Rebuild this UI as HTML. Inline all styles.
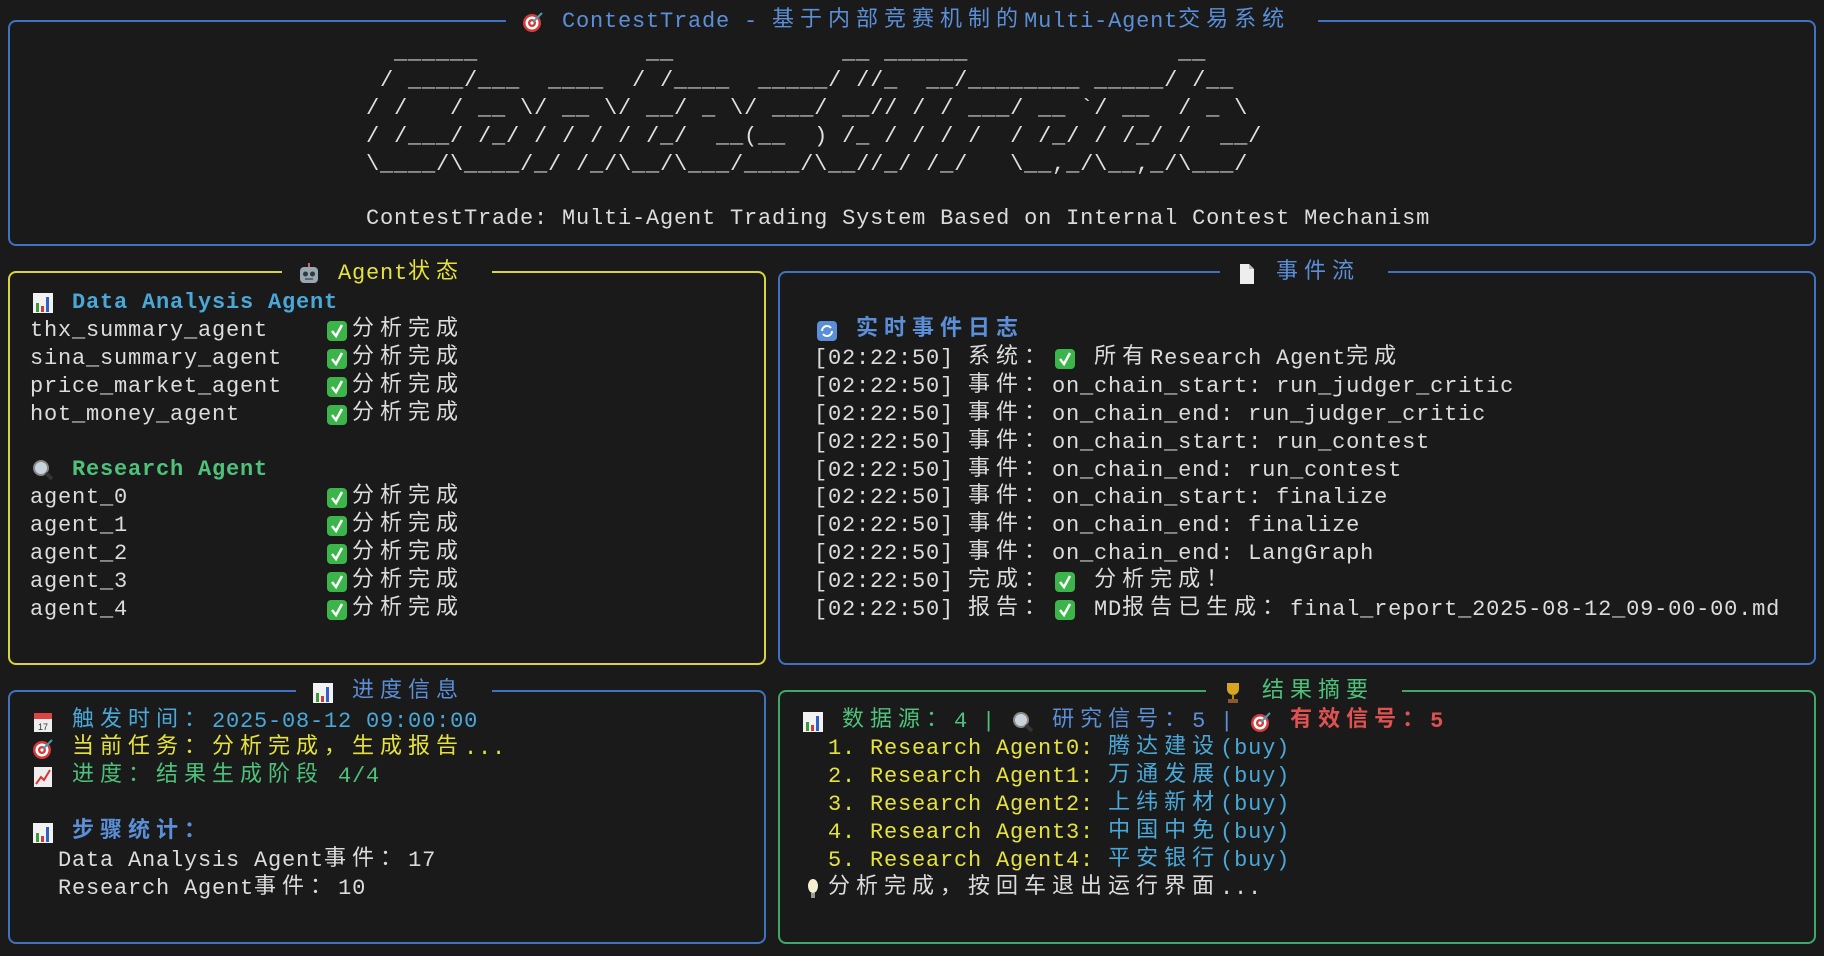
<!DOCTYPE html>
<html><head><meta charset="utf-8"><style>
html,body{margin:0;padding:0;background:#1a1a1a;width:1824px;height:956px;overflow:hidden;position:relative}
pre,.t{position:absolute;margin:0;font-family:"Liberation Mono","Noto Sans CJK SC",monospace;font-size:22px;letter-spacing:0.8px;line-height:27.9px;color:#dcdcdc;white-space:pre}
i{font-style:normal;letter-spacing:6px;font-family:"Noto Sans CJK SC","WenQuanYi Zen Hei",sans-serif;vertical-align:top;line-height:27.9px;display:inline-block;height:27.9px;position:relative;top:-4px}
.p{position:absolute;box-sizing:border-box;border:2px solid #3f72c0;border-radius:8px}
.e{display:inline-block;width:28px;height:27px;vertical-align:top;letter-spacing:0}
.e svg{margin-top:2px;margin-left:1px}
.bg{background:#1a1a1a;padding:0 14px 0 14px}
.blue{color:#5b8fd8}.cy{color:#4aa8d8}.gr{color:#4ec27a}.ye{color:#e6e23c}.re{color:#e05252}
b{font-weight:bold}
</style></head><body>
<svg width="0" height="0" style="position:absolute">
<defs>
<symbol id="chart" viewBox="0 0 24 24"><rect x="2" y="2" width="20" height="20" fill="#f2f2f2"/><rect x="5" y="12" width="3" height="9" fill="#3a9a3a"/><rect x="10" y="15" width="3" height="6" fill="#d23a3a"/><rect x="15" y="6" width="3" height="15" fill="#2f5fc8"/></symbol>
<symbol id="target" viewBox="0 0 24 24"><circle cx="11" cy="13" r="9" fill="#d83a3a"/><circle cx="11" cy="13" r="6.5" fill="#fff"/><circle cx="11" cy="13" r="4" fill="#d83a3a"/><circle cx="11" cy="13" r="1.6" fill="#fff"/><path d="M12 12 L21 3" stroke="#4a9ab0" stroke-width="2"/></symbol>
<symbol id="robot" viewBox="0 0 24 24"><rect x="11" y="1" width="2" height="4" fill="#c66"/><rect x="3" y="5" width="18" height="16" rx="4" fill="#9aa6b0"/><circle cx="8.5" cy="12" r="2.5" fill="#2c3a46"/><circle cx="15.5" cy="12" r="2.5" fill="#2c3a46"/><rect x="8" y="16" width="8" height="2" fill="#5a6670"/></symbol>
<symbol id="doc" viewBox="0 0 24 24"><path d="M5 2 H14 L19 7 V22 H5 Z" fill="#eee"/><path d="M14 2 V7 H19" fill="#bbb"/></symbol>
<symbol id="refresh" viewBox="0 0 24 24"><rect x="2" y="2" width="20" height="20" rx="4" fill="#5b8fd8"/><path d="M7 12 A5 5 0 0 1 16 9 M17 12 A5 5 0 0 1 8 15" stroke="#fff" stroke-width="2" fill="none"/></symbol>
<symbol id="mag" viewBox="0 0 24 24"><circle cx="10" cy="10" r="7" fill="#c8d4dc" stroke="#888" stroke-width="2"/><path d="M15 15 L21 21" stroke="#333" stroke-width="4"/></symbol>
<symbol id="cal" viewBox="0 0 24 24"><rect x="3" y="3" width="18" height="19" fill="#eee"/><rect x="3" y="3" width="18" height="6" fill="#d44"/><text x="12" y="20" font-size="9" text-anchor="middle" fill="#333" font-family="Liberation Sans">17</text></symbol>
<symbol id="trend" viewBox="0 0 24 24"><rect x="3" y="2" width="18" height="20" fill="#eee"/><path d="M5 19 L10 12 L13 15 L19 5" stroke="#d33" stroke-width="2" fill="none"/></symbol>
<symbol id="trophy" viewBox="0 0 24 24"><path d="M6 2 H18 V8 A6 6 0 0 1 6 8 Z" fill="#d9a520"/><rect x="11" y="13" width="2" height="5" fill="#b8860b"/><rect x="7" y="18" width="10" height="4" fill="#8b5a2b"/></symbol>
<symbol id="bulb" viewBox="0 0 24 24"><ellipse cx="12" cy="9" rx="5" ry="7" fill="#f4f0d0"/><rect x="10" y="16" width="4" height="5" fill="#999"/></symbol>
<symbol id="ok" viewBox="0 0 24 24"><rect x="2" y="2" width="20" height="20" rx="4" fill="#3bb54a"/><path d="M7 12 L11 17 L17 6" stroke="#fff" stroke-width="2.5" fill="none"/></symbol>
</defs></svg>

<div class="p" style="left:8px;top:20px;width:1808px;height:226px"></div>
<div class="p" style="left:8px;top:271px;width:758px;height:394px;border-color:#d8d43a"></div>
<div class="p" style="left:778px;top:271px;width:1038px;height:394px"></div>
<div class="p" style="left:8px;top:690px;width:758px;height:254px"></div>
<div class="p" style="left:778px;top:690px;width:1038px;height:254px;border-color:#3fa868"></div>

<pre style="left:506px;top:8px" class="blue"><span class="bg"><span class="e"><svg width="24" height="24"><use href="#target"/></svg></span> ContestTrade - <i>基于内部竞赛机制的</i>Multi-Agent<i>交易系统</i> </span></pre>
<pre style="left:366px;top:39px;color:#e0e0e0">  ______            __            __ ______               __
 / ____/___  ____  / /____  _____/ //_  __/________ _____/ /__
/ /   / __ \/ __ \/ __/ _ \/ ___/ __// / / ___/ __ `/ __  / _ \
/ /___/ /_/ / / / / /_/  __(__  ) /_ / / / /  / /_/ / /_/ /  __/
\____/\____/_/ /_/\__/\___/____/\__//_/ /_/   \__,_/\__,_/\___/</pre>
<pre style="left:366px;top:205px">ContestTrade: Multi-Agent Trading System Based on Internal Contest Mechanism</pre>

<pre style="left:282px;top:260px" class="ye"><span class="bg"><span class="e"><svg width="24" height="24"><use href="#robot"/></svg></span> Agent<i>状态</i> </span></pre>
<pre style="left:30px;top:289px"><span class="e"><svg width="24" height="24"><use href="#chart"/></svg></span> <b class="cy">Data Analysis Agent</b>
thx_summary_agent    <span class="e"><svg width="24" height="24"><use href="#ok"/></svg></span><i>分析完成</i>
sina_summary_agent   <span class="e"><svg width="24" height="24"><use href="#ok"/></svg></span><i>分析完成</i>
price_market_agent   <span class="e"><svg width="24" height="24"><use href="#ok"/></svg></span><i>分析完成</i>
hot_money_agent      <span class="e"><svg width="24" height="24"><use href="#ok"/></svg></span><i>分析完成</i>

<span class="e"><svg width="24" height="24"><use href="#mag"/></svg></span> <b class="gr">Research Agent</b>
agent_0              <span class="e"><svg width="24" height="24"><use href="#ok"/></svg></span><i>分析完成</i>
agent_1              <span class="e"><svg width="24" height="24"><use href="#ok"/></svg></span><i>分析完成</i>
agent_2              <span class="e"><svg width="24" height="24"><use href="#ok"/></svg></span><i>分析完成</i>
agent_3              <span class="e"><svg width="24" height="24"><use href="#ok"/></svg></span><i>分析完成</i>
agent_4              <span class="e"><svg width="24" height="24"><use href="#ok"/></svg></span><i>分析完成</i></pre>

<pre style="left:1220px;top:260px" class="blue"><span class="bg"><span class="e"><svg width="24" height="24"><use href="#doc"/></svg></span> <i>事件流</i> </span></pre>
<pre style="left:814px;top:317px"><span class="e"><svg width="24" height="24"><use href="#refresh"/></svg></span> <b class="blue"><i>实时事件日志</i></b>
[02:22:50] <i>系统：</i><span class="e"><svg width="24" height="24"><use href="#ok"/></svg></span> <i>所有</i>Research Agent<i>完成</i>
[02:22:50] <i>事件：</i>on_chain_start: run_judger_critic
[02:22:50] <i>事件：</i>on_chain_end: run_judger_critic
[02:22:50] <i>事件：</i>on_chain_start: run_contest
[02:22:50] <i>事件：</i>on_chain_end: run_contest
[02:22:50] <i>事件：</i>on_chain_start: finalize
[02:22:50] <i>事件：</i>on_chain_end: finalize
[02:22:50] <i>事件：</i>on_chain_end: LangGraph
[02:22:50] <i>完成：</i><span class="e"><svg width="24" height="24"><use href="#ok"/></svg></span> <i>分析完成！</i>
[02:22:50] <i>报告：</i><span class="e"><svg width="24" height="24"><use href="#ok"/></svg></span> MD<i>报告已生成：</i>final_report_2025-08-12_09-00-00.md</pre>

<pre style="left:296px;top:678.5px" class="blue"><span class="bg"><span class="e"><svg width="24" height="24"><use href="#chart"/></svg></span> <i>进度信息</i> </span></pre>
<pre style="left:30px;top:707.5px"><span class="e"><svg width="24" height="24"><use href="#cal"/></svg></span> <span class="cy"><i>触发时间：</i>2025-08-12 09:00:00</span>
<span class="e"><svg width="24" height="24"><use href="#target"/></svg></span> <span class="ye"><i>当前任务：分析完成，生成报告</i>...</span>
<span class="e"><svg width="24" height="24"><use href="#trend"/></svg></span> <span class="gr"><i>进度：结果生成阶段</i> 4/4</span>

<span class="e"><svg width="24" height="24"><use href="#chart"/></svg></span> <b class="blue"><i>步骤统计：</i></b>
  Data Analysis Agent<i>事件：</i>17
  Research Agent<i>事件：</i>10</pre>

<pre style="left:1206px;top:678.5px" class="gr"><span class="bg"><span class="e"><svg width="24" height="24"><use href="#trophy"/></svg></span> <i>结果摘要</i> </span></pre>
<pre style="left:800px;top:707.5px"><span class="e"><svg width="24" height="24"><use href="#chart"/></svg></span> <span class="gr"><i>数据源：</i>4 |</span> <span class="e"><svg width="24" height="24"><use href="#mag"/></svg></span> <span class="blue"><i>研究信号：</i>5 |</span> <span class="e"><svg width="24" height="24"><use href="#target"/></svg></span> <b class="re"><i>有效信号：</i>5</b>
  <span class="ye">1. Research Agent0:</span> <span class="cy"><i>腾达建设</i>(buy)</span>
  <span class="ye">2. Research Agent1:</span> <span class="cy"><i>万通发展</i>(buy)</span>
  <span class="ye">3. Research Agent2:</span> <span class="cy"><i>上纬新材</i>(buy)</span>
  <span class="ye">4. Research Agent3:</span> <span class="cy"><i>中国中免</i>(buy)</span>
  <span class="ye">5. Research Agent4:</span> <span class="cy"><i>平安银行</i>(buy)</span>
<span class="e"><svg width="24" height="24"><use href="#bulb"/></svg></span><i>分析完成，按回车退出运行界面</i>...</pre>
</body></html>
